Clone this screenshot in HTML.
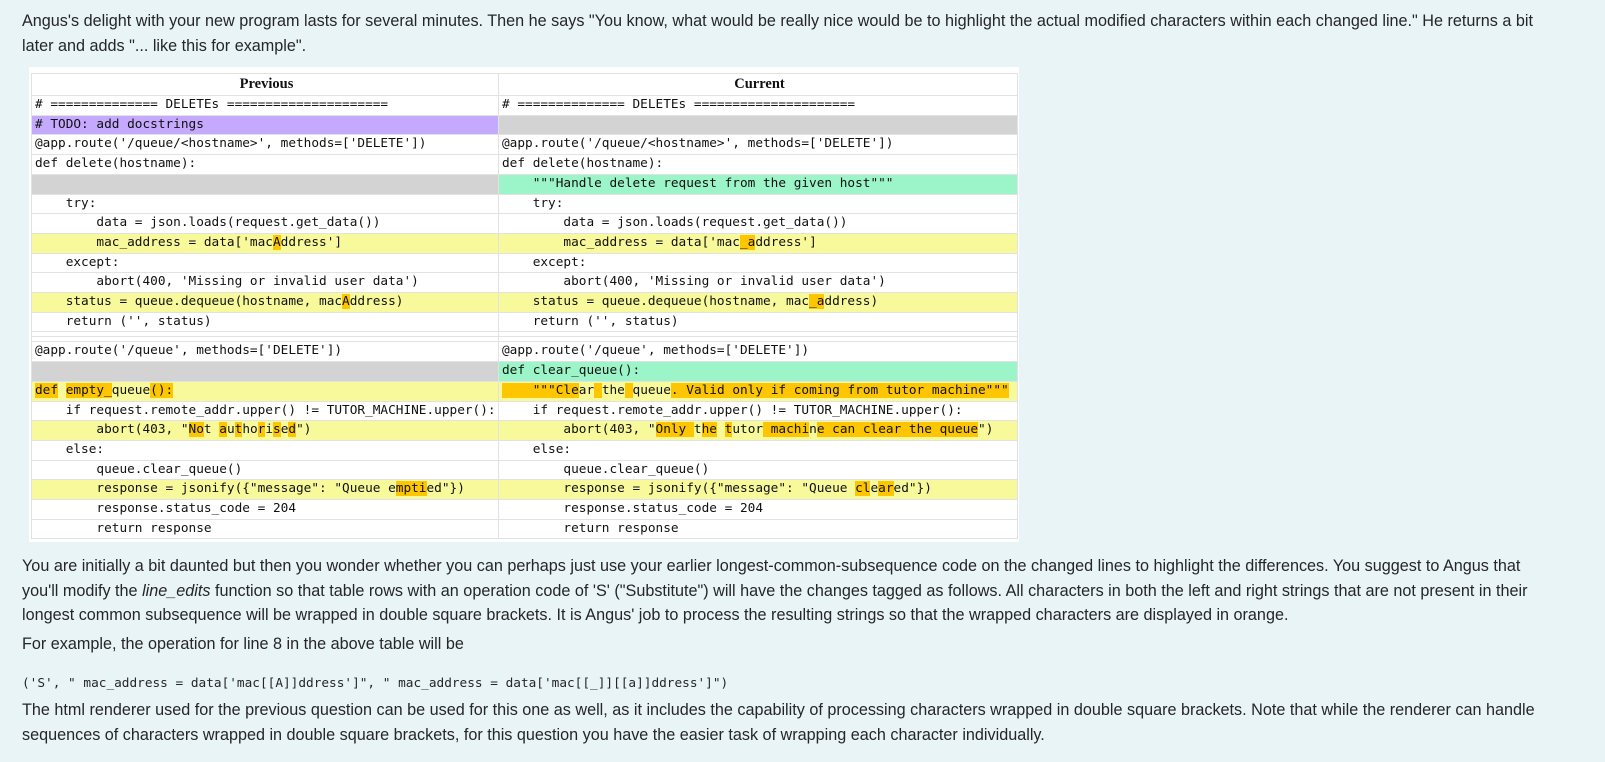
<!DOCTYPE html>
<html><head><meta charset="utf-8"><style>
body{margin:0;background:#e9f4f7;font-family:"Liberation Sans",sans-serif;color:#262626;font-size:16.2px;width:1605px;height:762px;overflow:hidden;position:relative}
.p{position:absolute;left:22px;line-height:24.6px;margin:0;white-space:nowrap}
.box{position:absolute;left:29px;top:67px;width:990px;height:475px;background:#fff}
table{position:absolute;left:2px;top:6px;border-collapse:collapse;table-layout:fixed;width:986px}
td,th{border:1px solid #e2e2e2;padding:0 0 0 3px;font-family:"DejaVu Sans Mono","Liberation Mono",monospace;font-size:12.75px;white-space:pre;height:18.7px;line-height:18.7px;overflow:hidden;color:#111}
th{font-family:"Liberation Serif",serif;font-weight:bold;font-size:14.5px;text-align:center;height:21px;line-height:21px}
.y{background:#f8f99a}.g{background:#d3d3d3}.pu{background:#c5a9fd}.gr{background:#9cf5c9}
i{font-style:normal;background:#fdc600}
tr.sep td{height:4px;padding:0;line-height:0}
code{font-family:"DejaVu Sans Mono",monospace;font-size:12.75px}
</style></head><body>
<p class="p" style="top:9px">Angus's delight with your new program lasts for several minutes. Then he says "You know, what would be really nice would be to highlight the actual modified characters within each changed line." He returns a bit<br>later and adds "... like this for example".</p>
<div class="box"><table>
<col style="width:467px"><col style="width:519px">
<tr><th>Previous</th><th>Current</th></tr>
<tr><td># ============== DELETEs =====================</td><td># ============== DELETEs =====================</td></tr>
<tr><td class="pu"># TODO: add docstrings</td><td class="g"></td></tr>
<tr><td>@app.route('/queue/&lt;hostname&gt;', methods=['DELETE'])</td><td>@app.route('/queue/&lt;hostname&gt;', methods=['DELETE'])</td></tr>
<tr><td>def delete(hostname):</td><td>def delete(hostname):</td></tr>
<tr><td class="g"></td><td class="gr">    """Handle delete request from the given host"""</td></tr>
<tr><td>    try:</td><td>    try:</td></tr>
<tr><td>        data = json.loads(request.get_data())</td><td>        data = json.loads(request.get_data())</td></tr>
<tr><td class="y">        mac_address = data['mac<i>A</i>ddress']</td><td class="y">        mac_address = data['mac<i>_</i><i>a</i>ddress']</td></tr>
<tr><td>    except:</td><td>    except:</td></tr>
<tr><td>        abort(400, 'Missing or invalid user data')</td><td>        abort(400, 'Missing or invalid user data')</td></tr>
<tr><td class="y">    status = queue.dequeue(hostname, mac<i>A</i>ddress)</td><td class="y">    status = queue.dequeue(hostname, mac<i>_a</i>ddress)</td></tr>
<tr><td>    return ('', status)</td><td>    return ('', status)</td></tr>
<tr class="sep"><td></td><td></td></tr>
<tr class="sep"><td></td><td></td></tr>
<tr><td>@app.route('/queue', methods=['DELETE'])</td><td>@app.route('/queue', methods=['DELETE'])</td></tr>
<tr><td class="g"></td><td class="gr">def clear_queue():</td></tr>
<tr><td class="y"><i>def</i> <i>empty_</i>queue<i>():</i></td><td class="y"><i>    """Cle</i>ar<i> </i>the<i> </i>queue<i>. Valid only if coming from tutor machine"""</i></td></tr>
<tr><td>    if request.remote_addr.upper() != TUTOR_MACHINE.upper():</td><td>    if request.remote_addr.upper() != TUTOR_MACHINE.upper():</td></tr>
<tr><td class="y">        abort(403, "<i>No</i>t <i>a</i>u<i>t</i>ho<i>r</i>i<i>s</i>e<i>d</i>")</td><td class="y">        abort(403, "<i>Only </i>t<i>he</i> <i>t</i>utor<i> machi</i>n<i>e can clear the queue</i>")</td></tr>
<tr><td>    else:</td><td>    else:</td></tr>
<tr><td>        queue.clear_queue()</td><td>        queue.clear_queue()</td></tr>
<tr><td class="y">        response = jsonify({"message": "Queue e<i>mpti</i>ed"})</td><td class="y">        response = jsonify({"message": "Queue <i>cl</i>e<i>ar</i>ed"})</td></tr>
<tr><td>        response.status_code = 204</td><td>        response.status_code = 204</td></tr>
<tr><td>        return response</td><td>        return response</td></tr>
</table></div>
<p class="p" style="top:554px">You are initially a bit daunted but then you wonder whether you can perhaps just use your earlier longest-common-subsequence code on the changed lines to highlight the differences. You suggest to Angus that<br>you'll modify the <em>line_edits</em> function so that table rows with an operation code of 'S' ("Substitute") will have the changes tagged as follows. All characters in both the left and right strings that are not present in their<br>longest common subsequence will be wrapped in double square brackets. It is Angus' job to process the resulting strings so that the wrapped characters are displayed in orange.</p>
<p class="p" style="top:632px">For example, the operation for line 8 in the above table will be</p>
<p class="p" style="top:670px"><code>('S', " mac_address = data['mac[[A]]ddress']", " mac_address = data['mac[[_]][[a]]ddress']")</code></p>
<p class="p" style="top:698px">The html renderer used for the previous question can be used for this one as well, as it includes the capability of processing characters wrapped in double square brackets. Note that while the renderer can handle<br>sequences of characters wrapped in double square brackets, for this question you have the easier task of wrapping each character individually.</p>
</body></html>
